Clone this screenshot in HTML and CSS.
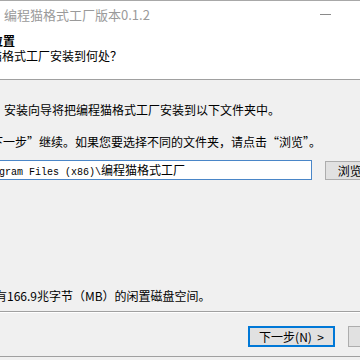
FILE: index.html
```html
<!DOCTYPE html>
<html>

	<head>
		<meta charset="UTF-8">
		<title>编程猫格式工厂版本0.1.2</title>
		<link rel="stylesheet" href="styles.css">
	</head>

	<body>
		<div class="win">
			<div class="titlebar">
				<span class="title">编程猫格式工厂版本0.1.2</span>
				<span class="ctrl"><i class="min"></i></span>
				<span class="ctrl"></span>
				<span class="ctrl"></span>
			</div>
			<div class="header">
				<div class="h-title">选择目标位置</div>
				<div class="h-sub">将编程猫格式工厂安装到何处？</div>
			</div>
			<div class="main">
				<p class="intro">安装向导将把编程猫格式工厂安装到以下文件夹中。</p>
				<p class="hint">点击“下一步”继续。如果您要选择不同的文件夹，请点击“浏览”。</p>
				<div class="dir-row">
					<div class="dir-input"><span class="asc">C:\Program Files (x86)\</span>编程猫格式工厂</div>
					<div class="btn browse">浏览(R)...</div>
				</div>
				<p class="space">至少需要有166.9兆字节（MB）的闲置磁盘空间。</p>
			</div>
			<div class="footer">
				<div class="btn primary">下一步(N)&nbsp;&nbsp;&gt;</div>
				<div class="btn">取消</div>
			</div>
		</div>
	</body>

</html>
```

FILE: styles.css
```css
* {
	padding: 0;
	margin: 0;
}

html,
body {
	width: 360px;
	height: 360px;
	overflow: hidden;
	background: #f0f0f0;
}

body {
	font-family: "Noto Sans CJK SC", sans-serif;
	font-size: 12px;
	color: #000;
}

.win {
	width: 520px;
	margin-left: -80px;
	border-top: 1px solid #a8a8a8;
	border-bottom: 1px solid #a0a0a0;
	background: #f0f0f0;
}

.titlebar {
	height: 27px;
	display: flex;
	align-items: center;
	background: #fff;
}

.title {
	flex: 1;
	padding-left: 84px;
	font-size: 13px;
	color: #9a9a9a;
	line-height: 27px;
}

.ctrl {
	width: 46px;
	height: 27px;
	display: flex;
	align-items: center;
	justify-content: center;
}

.min {
	width: 11px;
	height: 1px;
	background: #8a8a8a;
}

.header {
	height: 52px;
	padding-top: 6px;
	box-sizing: border-box;
	background: #fff;
	border-bottom: 1px solid #a0a0a0;
}

.h-title {
	padding-left: 23px;
	font-weight: bold;
	line-height: 14px;
}

.h-sub {
	padding-left: 34px;
	margin-top: 1px;
	line-height: 14px;
}

.main {
	height: 232px;
	padding: 23px 0 0 35px;
	box-sizing: border-box;
	border-bottom: 1px solid #a0a0a0;
}

.main p {
	line-height: 14px;
}

.intro {
	padding-left: 49px;
}

.hint {
	margin-top: 18px;
}

.dir-row {
	display: flex;
	align-items: center;
	gap: 13px;
	margin-top: 11px;
}

.dir-input {
	width: 357px;
	height: 20px;
	box-sizing: border-box;
	padding-left: 7px;
	border: 1px solid #4a86c8;
	background: #fff;
	line-height: 18px;
	white-space: nowrap;
	overflow: hidden;
}

.asc {
	font-family: "Liberation Mono", monospace;
	font-size: 10px;
}

.btn {
	width: 87px;
	height: 21px;
	box-sizing: border-box;
	border: 1px solid #adadad;
	background: #e1e1e1;
	text-align: center;
	line-height: 19px;
}

.browse {
	width: 75px;
	height: 19px;
	line-height: 17px;
}

.space {
	margin-top: 109px;
	margin-left: -8px;
}

.footer {
	height: 44px;
	display: flex;
	justify-content: flex-end;
	gap: 13px;
	padding: 13px 5px 0 0;
	box-sizing: border-box;
	border-top: 1px solid #fff;
}

.primary {
	border: 2px solid #0078d7;
	line-height: 17px;
}
```
